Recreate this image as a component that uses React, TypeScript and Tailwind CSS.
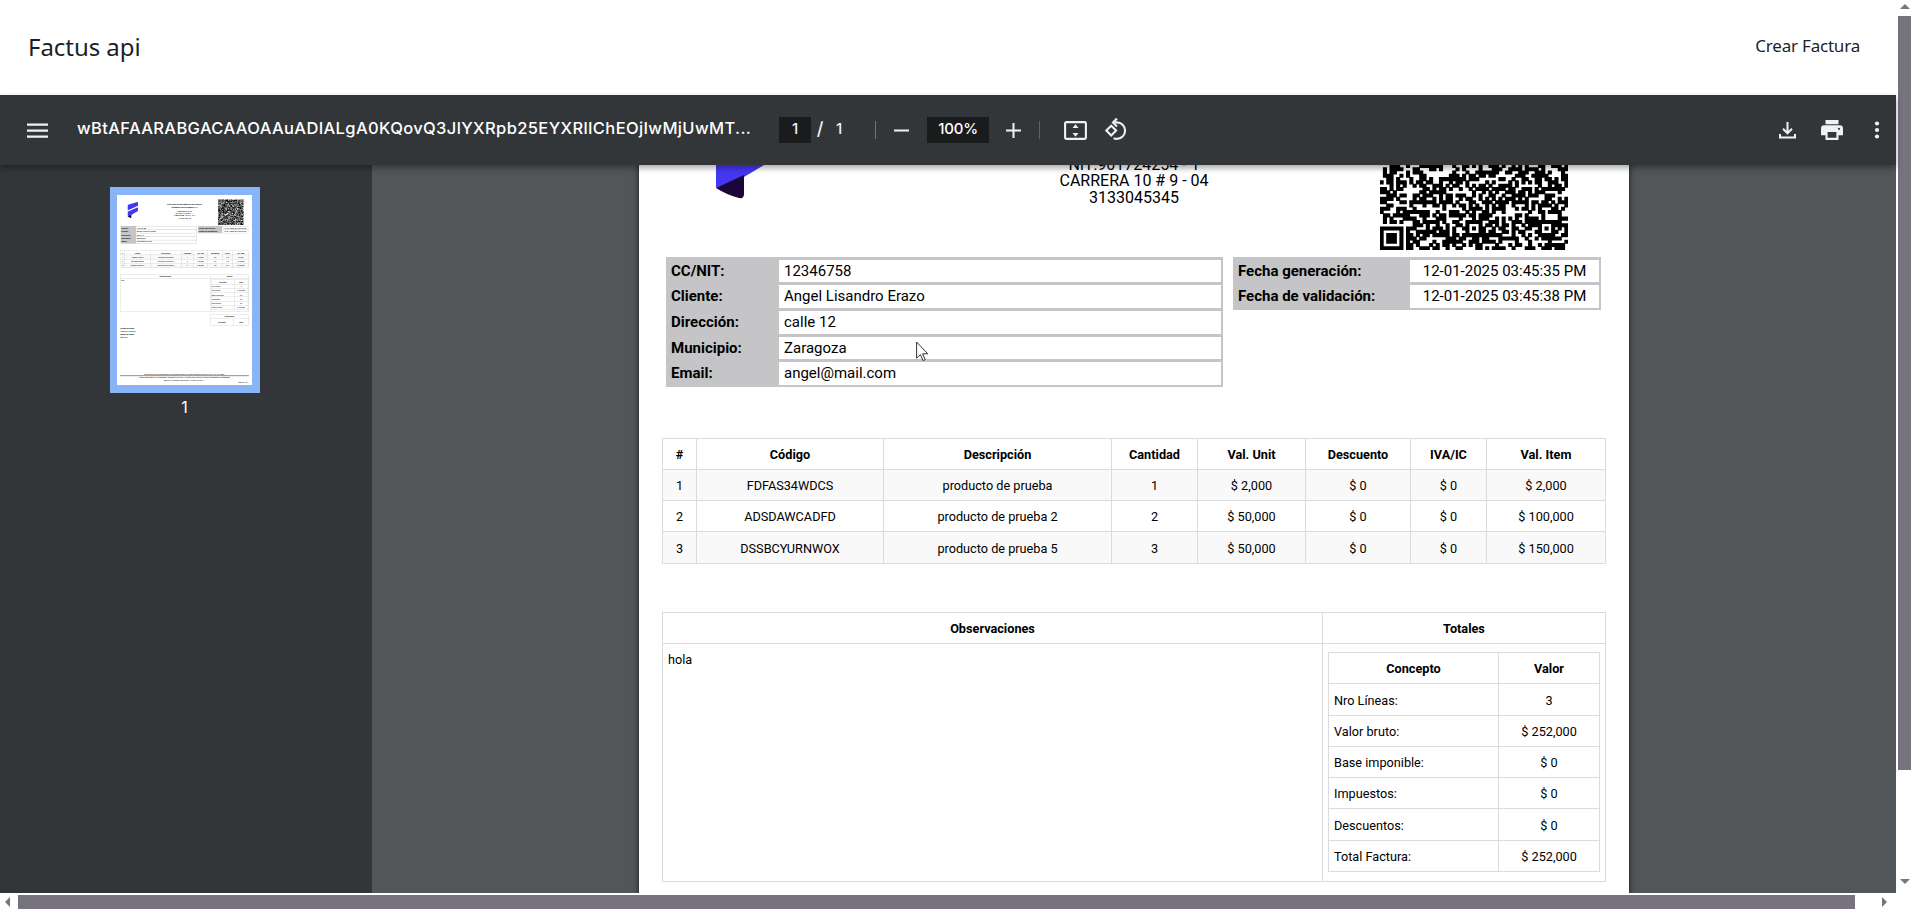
import React from "react";
import clsx from "clsx";
import { MdArrowDropDown, MdArrowDropUp, MdArrowLeft, MdArrowRight } from "react-icons/md";

const customer = [
  ["CC/NIT:", "12346758"],
  ["Cliente:", "Angel Lisandro Erazo"],
  ["Dirección:", "calle 12"],
  ["Municipio:", "Zaragoza"],
  ["Email:", "angel@mail.com"]
];

const dates = [
  ["Fecha generación:", "12-01-2025 03:45:35 PM"],
  ["Fecha de validación:", "12-01-2025 03:45:38 PM"]
];

const itemHeaders = ["#", "Código", "Descripción", "Cantidad", "Val. Unit", "Descuento", "IVA/IC", "Val. Item"];

const items = [
  ["1", "FDFAS34WDCS", "producto de prueba", "1", "$ 2,000", "$ 0", "$ 0", "$ 2,000"],
  ["2", "ADSDAWCADFD", "producto de prueba 2", "2", "$ 50,000", "$ 0", "$ 0", "$ 100,000"],
  ["3", "DSSBCYURNWOX", "producto de prueba 5", "3", "$ 50,000", "$ 0", "$ 0", "$ 150,000"]
];

const totals = [
  ["Nro Líneas:", "3"],
  ["Valor bruto:", "$ 252,000"],
  ["Base imponible:", "$ 0"],
  ["Impuestos:", "$ 0"],
  ["Descuentos:", "$ 0"],
  ["Total Factura:", "$ 252,000"]
];

// QR version 10: 57 x 57 modules
const QR_SIZE = 57;

function ring(x: number, y: number, cx: number, cy: number) {
  return Math.max(Math.abs(x - cx), Math.abs(y - cy));
}

function buildQrPath() {
  let seed = 90172;
  let path = "";
  for (let y = 0; y < QR_SIZE; y++) {
    for (let x = 0; x < QR_SIZE; x++) {
      seed = (seed * 1103515245 + 12345) % 2147483648;
      let dark = seed / 2147483648 < 0.53;
      if (x === 6 || y === 6) dark = (x + y) % 2 === 0;
      for (const cx of [6, 28, 50]) {
        for (const cy of [6, 28, 50]) {
          if (ring(x, y, cx, cy) <= 2 && !(cx !== 28 && cy !== 28 && (cx === 6 || cy === 6))) {
            dark = ring(x, y, cx, cy) !== 1;
          }
        }
      }
      for (const [cx, cy] of [[3, 3], [53, 3], [3, 53]]) {
        const r = ring(x, y, cx, cy);
        if (r <= 4) dark = r !== 2 && r !== 4;
      }
      if (dark) path += `M${x - 0.12} ${y - 0.12}h1.24v1.24h-1.24z`;
    }
  }
  return path;
}

const qrPath = buildQrPath();

function InfoTable({ rows, className, valueClassName }: { rows: string[][]; className: string; valueClassName?: string }) {
  return (
    <div className={clsx("grid bg-[#c5c4c6] text-[15px] text-black gap-x-[2px] gap-y-[3px] pt-[3px] pb-[2px] pr-[2px]", className)}>
      {rows.map(([label, value]) => (
        <React.Fragment key={label}>
          <div className="pl-[5px] font-bold leading-[23px] h-[22.7px]">{label}</div>
          <div className={clsx("bg-white leading-[23px] h-[22.7px]", valueClassName || "pl-[5px]")}>{value}</div>
        </React.Fragment>
      ))}
    </div>
  );
}

function Cell({ children, className }: { children?: React.ReactNode; className?: string }) {
  return (
    <div className={clsx("flex items-center border-r border-b border-[#dcdcdf] pt-[2px]", className || "justify-center")}>
      {children}
    </div>
  );
}

function InvoicePage() {
  return (
    <div className="w-[990px] h-[1400px] shrink-0 bg-white px-[23px] pt-8 font-['Roboto',sans-serif] text-black flex flex-col">
      <div className="flex h-[194.5px] pl-1 pr-[38px]">
        <div className="w-[264px] pl-[50px] pt-[19px]">
          <svg width="77" height="118" viewBox="77 51 77 118">
            <path d="M77 77q0-4 4-6l68-19q5-1 5 4v18q0 5-4 7L77 114z" fill="#4338f0" />
            <path d="M77 127q0-4 4-6l68-29q5-2 5 3v18q0 4-4 7l-45 27-28 11z" fill="#4338f0" />
            <path d="M77 158l28-13v19q0 5-5 4-12-3-23-10z" fill="#1b0638" />
          </svg>
        </div>
        <div className="flex-1 text-center text-base leading-[16.2px] pt-6 pr-[42px]">
          <div className="font-bold leading-[22px]">FACTURA ELECTRÓNICA DE VENTA</div>
          <div className="font-bold leading-[22px] mb-[11px]">NÚMERO SETP990003117</div>
          <div className="font-bold">FACTUS S.A.S</div>
          <div>NIT:901724254 - 1</div>
          <div>CARRERA 10 # 9 - 04</div>
          <div>3133045345</div>
        </div>
        <svg width="188" height="188" viewBox="0 0 57 57">
          <path d={qrPath} fill="#000" />
        </svg>
      </div>

      <div className="flex items-start gap-[10px] pl-1 h-[181.5px]">
        <InfoTable rows={customer} className="w-[557px] grid-cols-[111px_1fr]" />
        <InfoTable rows={dates} className="w-[368px] grid-cols-[175px_1fr]" valueClassName="text-center" />
      </div>

      {/* Detalle de productos */}
      <div className="w-[944px] border-l border-t border-[#dcdcdf] text-[12.7px]">
        <div className="grid grid-cols-[34px_187px_228px_86px_108px_105px_76px_119px] h-[31px] font-bold">
          {itemHeaders.map((header) => (
            <Cell key={header}>{header}</Cell>
          ))}
        </div>
        {items.map((row, index) => (
          <div
            key={row[0]}
            className={clsx(
              "grid grid-cols-[34px_187px_228px_86px_108px_105px_76px_119px]",
              index % 2 === 0 && "bg-[#f9f9fa]",
              index === 2 ? "h-8" : "h-[31px]"
            )}
          >
            {row.map((value, i) => (
              <Cell key={i}>{value}</Cell>
            ))}
          </div>
        ))}
      </div>

      <div className="mt-12 w-[944px] border-l border-t border-[#dcdcdf] text-[12.7px] grid grid-cols-[660px_283px] grid-rows-[31px_238px]">
        <Cell className="justify-center font-bold">Observaciones</Cell>
        <Cell className="justify-center font-bold">Totales</Cell>
        <div className="border-r border-b border-[#dcdcdf] pl-[5px] pt-[6px] leading-5">hola</div>
        <div className="border-r border-b border-[#dcdcdf] pl-[5px] pt-2">
          <div className="w-[272px] border-l border-t border-[#dcdcdf] grid grid-cols-[170px_101px] grid-rows-[31px_32px_31px_31px_31px_32px_31px]">
            <Cell className="justify-center font-bold">Concepto</Cell>
            <Cell className="justify-center font-bold">Valor</Cell>
            {totals.map(([label, value]) => (
              <React.Fragment key={label}>
                <Cell className="pl-[5px]">{label}</Cell>
                <Cell>{value}</Cell>
              </React.Fragment>
            ))}
          </div>
        </div>
      </div>

      <div className="mt-6 ml-[660px] w-[284px] border-l border-t border-[#dcdcdf] text-[12.7px] grid grid-cols-[170px_113px] grid-rows-[31px_48px]">
        <Cell className="col-span-2 justify-center font-bold">Retenciones</Cell>
        <Cell className="justify-center font-bold">Concepto</Cell>
        <Cell className="justify-center font-bold">Valor</Cell>
      </div>

      <div className="mt-2 text-[15px] leading-[22px]">
        <div className="font-bold">Forma de pago:</div>
        <div>Pago de contado</div>
        <div className="font-bold">Medio de pago:</div>
        <div>Efectivo</div>
      </div>

      <div className="mt-auto mb-5 text-center text-[13px] leading-4">
        <div>A esta factura de venta aplican las normas relativas a la letra de cambio (artículo 5 Ley 1231 de 2008).</div>
        <div className="border-t-[6px] border-[#333] pt-1">
          Número Autorización 18760000001 aprobado en 20190119 prefijo SETP desde el número 990000000 al 995000000
        </div>
        <div>FACTUS - Proveedor tecnológico - NIT 901724254 - 1</div>
        <div className="text-right">página 1 de 1</div>
      </div>
    </div>
  );
}

function Toolbar() {
  return (
    <div className="relative z-10 flex items-center h-[70px] bg-[#323639] text-[#f1f1f1] shadow-[0_3px_6px_rgba(0,0,0,0.35)] font-['Inter',sans-serif] font-medium">
      <svg className="ml-[27px] mt-px" width="21" height="15" viewBox="0 0 21 15" fill="currentColor">
        <path d="M0 .5h21v2.3H0zM0 6.5h21v2.3H0zM0 12.5h21v2.3H0z" />
      </svg>
      <div className="ml-[29px] -mt-[3px] w-[680px] whitespace-nowrap text-[16.5px] tracking-[0.37px] text-white">
        wBtAFAARABGACAAOAAuADIALgA0KQovQ3JlYXRpb25EYXRlIChEOjIwMjUwMT...
      </div>
      <div className="ml-[22px] -mt-px flex w-8 h-[26px] items-center justify-center bg-[#191b1c] text-[15px]">1</div>
      <div className="ml-[5px] -mt-[2px] w-2 text-center text-lg">/</div>
      <div className="ml-[11px] -mt-[2px] w-2 text-center text-[15px]">1</div>
      <div className="ml-8 w-px h-[18px] bg-[#707376]" />
      <svg className="ml-[18px] mt-px" width="15" height="15" viewBox="0 0 15 15" fill="currentColor">
        <path d="M0 6.5h15v2H0z" />
      </svg>
      <div className="ml-[18px] -mt-px flex w-[62px] h-[26px] items-center justify-center bg-[#191b1c] text-[15px] tracking-[-0.2px] text-white">
        100%
      </div>
      <svg className="ml-[17px] mt-px" width="15" height="15" viewBox="0 0 15 15" fill="currentColor">
        <path d="M0 6.5h15v2H0zM6.5 0h2v15h-2z" />
      </svg>
      <div className="ml-[18px] w-px h-[18px] bg-[#606366]" />
      {/* Ajustar a la página */}
      <svg className="ml-6 mt-px" width="23" height="19" viewBox="0 0 23 19">
        <rect x="1.1" y="1.1" width="20.8" height="16.8" rx="1.4" fill="none" stroke="currentColor" strokeWidth="2.1" />
        <path d="M11.5 3.3l3 3.6h-6zM11.5 15.7l3-3.6h-6z" fill="currentColor" />
      </svg>
      {/* Girar */}
      <svg className="ml-[17px] -mt-px" width="24" height="23" viewBox="0 0 24 23" fill="none" stroke="currentColor" strokeWidth="2.1">
        <path d="M7.2 7.7l4.9 4.9-4.9 4.9-4.9-4.9z" />
        <path d="M10.2 4.4h2.6a8.2 8.2 0 0 1 0 16.5q-1.6 0-3.2-.6" />
        <path d="M13 .4L9 4.4l4 4" />
      </svg>
      <div className="ml-auto flex items-center pr-[16px]">
        <svg width="17" height="17" viewBox="0 0 17 17" fill="none" stroke="currentColor" strokeWidth="2">
          <path d="M8.5 0v11M4 6.8l4.5 4.5L13 6.8M1 12v3.5h15V12" />
        </svg>
        <svg className="ml-[25px]" width="22" height="20" viewBox="0 0 22 20" fill="currentColor">
          <path d="M4.5 0h13v4.2h-13zM3.4 5.3h15.2A3.2 3.2 0 0 1 22 8.5v6.7h-4.5V20h-13v-4.8H0V8.5a3.2 3.2 0 0 1 3.4-3.2zM6.6 12v5.8h8.8V12zM18 7.7a1.1 1.1 0 1 0 .01 0z" fillRule="evenodd" />
        </svg>
        <svg className="ml-[31px]" width="6" height="18" viewBox="0 0 6 18" fill="currentColor">
          <circle cx="3" cy="2.5" r="2.1" />
          <circle cx="3" cy="9" r="2.1" />
          <circle cx="3" cy="15.5" r="2.1" />
        </svg>
      </div>
    </div>
  );
}

export default function App() {
  return (
    <div className="relative flex flex-col w-[1911px] h-[909px] overflow-hidden bg-white">
      <div className="flex h-[893px]">
        <div className="flex flex-col w-[1896px]">
          <header className="flex items-center justify-between h-[95px] shrink-0 pl-7 pr-9 text-[#1b1f27] font-['Noto_Sans','Open_Sans',sans-serif]">
            <h1 className="text-2xl tracking-[-0.05px] -mt-px">Factus api</h1>
            <a className="text-[17px] -mt-1 tracking-[-0.2px]">Crear Factura</a>
          </header>

          <Toolbar />

          <div className="flex h-[728px]">
            <aside className="w-[372px] bg-[#323639] pt-[22px] pl-[109.5px]">
              <div className="w-[150px] h-[206px] bg-[#8ab4f8] py-2 pl-[7.5px]">
                <div className="w-[135px] h-[190px] overflow-hidden bg-white">
                  {/* Bordes más oscuros para que se vean en miniatura */}
                  <div className="w-[990px] origin-top-left scale-[0.1364] [&_div]:border-[#777]">
                    <InvoicePage />
                  </div>
                </div>
              </div>
              <div className="mt-[2px] w-[150px] text-center text-base text-white font-['Inter',sans-serif]">1</div>
            </aside>
            <main className="flex flex-1 justify-start items-start overflow-hidden bg-[#525659] pl-[267px]">
              <div className="-mt-[135px] shadow-[0_0_6px_rgba(0,0,0,0.7)]">
                <InvoicePage />
              </div>
            </main>
          </div>
        </div>

        {/* Scroll vertical */}
        <div className="flex flex-col items-center w-[15px] pl-[2px] text-[#77757f]">
          <MdArrowDropUp className="w-6 h-6 -mt-[5px] -mb-[3px] shrink-0" />
          <div className="w-[13px] h-[754px] bg-[#76737f]" />
          <MdArrowDropDown className="w-6 h-6 mt-auto shrink-0" />
        </div>
      </div>

      {/* Scroll horizontal */}
      <div className="flex items-center h-4 pt-[2px] text-[#77757f]">
        <MdArrowLeft className="w-6 h-6 -ml-1 -mr-[2px] shrink-0" />
        <div className="w-[1837px] h-[14px] bg-[#76737f]" />
        <MdArrowRight className="w-6 h-6 ml-[17px] shrink-0" />
      </div>

      <svg className="absolute left-[916px] top-[341px]" width="13" height="21" viewBox="0 0 13 21">
        <path d="M.6 1v16.2l3.8-3.6 2.6 6 2.2-1-2.6-5.8h5.2z" fill="#fff" stroke="#333" />
      </svg>
    </div>
  );
}
